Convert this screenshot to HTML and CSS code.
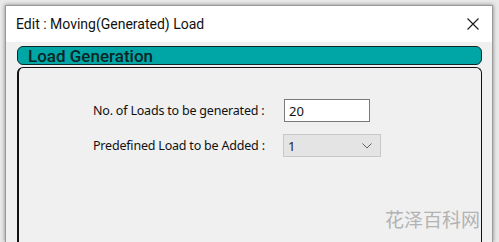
FILE: index.html
```html
<!DOCTYPE html>
<html lang="en">
<head>
    <meta charset="UTF-8">
    <title>Edit : Moving(Generated) Load</title>
    <link rel="stylesheet" href="styles.css">
</head>
<body>
    <div class="window">
        <div class="titlebar">
            <span class="title">Edit : Moving(Generated) Load</span>
            <svg class="close" width="12" height="12" viewBox="0 0 12 12">
                <path d="M0.5 0.5 L11.5 11.5 M11.5 0.5 L0.5 11.5" stroke="#1a1a1a" stroke-width="1.1" fill="none"/>
            </svg>
        </div>
        <div class="content">
            <div class="group-head">Load Generation</div>
            <div class="group-body">
                <div class="form">
                    <label class="label" for="count">No. of Loads to be generated :</label>
                    <input class="textbox" id="count" type="text" value="20">
                    <label class="label" for="predef">Predefined Load to be Added :</label>
                    <div class="combo" id="predef">
                        <span>1</span>
                        <svg width="10" height="6" viewBox="0 0 10 6">
                            <path d="M0.5 0.5 L5 5 L9.5 0.5" stroke="#606060" stroke-width="1" fill="none"/>
                        </svg>
                    </div>
                </div>
            </div>
            <div class="watermark">花泽百科网</div>
        </div>
    </div>
</body>
</html>
```

FILE: styles.css
```css
html, body {
    height: 100%;
}

body {
    margin: 0;
    padding: 5px 6px 0 5px;
    background: #e9e9e9;
    box-sizing: border-box;
    overflow: hidden;
    font-family: "Noto Sans", "Open Sans", sans-serif;
}

.window {
    height: 100%;
    display: flex;
    flex-direction: column;
    background: #fff;
    box-shadow: 0 0 4px rgba(0, 0, 0, 0.45);
    border: 1px solid #9a9a9a;
    border-bottom: none;
    box-sizing: border-box;
}

.titlebar {
    height: 36px;
    flex: none;
    display: flex;
    align-items: center;
    justify-content: space-between;
    padding: 0 13px 0 10px;
}

.title {
    font-family: Roboto, "Noto Sans", sans-serif;
    font-size: 14px;
    color: #111;
}

.content {
    position: relative;
    flex: 1;
    display: flex;
    flex-direction: column;
    background: #f0f0f0;
    padding: 4px 10px 0 11px;
}

.group-head {
    height: 17px;
    flex: none;
    background: #00a6a6;
    border: 1px solid #0b2b2b;
    border-radius: 6px;
    padding-left: 10px;
    font-family: Roboto, "Liberation Sans", sans-serif;
    font-weight: 500;
    font-size: 17px;
    line-height: 18px;
    color: #0a2424;
}

.group-body {
    margin-top: 2px;
    flex: 1;
    border: 1px solid #111;
    border-bottom: none;
    border-left-width: 2px;
    border-radius: 6px 6px 0 0;
    padding: 31px 0 0 74px;
}

.form {
    display: grid;
    grid-template-columns: 191px auto;
    row-gap: 12px;
    align-items: center;
    justify-items: start;
}

.label {
    font-size: 12.5px;
    color: #111;
    letter-spacing: -0.2px;
}

.textbox {
    width: 80px;
    height: 21px;
    margin: 0;
    padding: 0 0 0 4px;
    border: 1px solid #7a7a7a;
    background: #fff;
    font-family: "Noto Sans", sans-serif;
    font-size: 13px;
    color: #111;
    box-sizing: content-box;
}

.combo {
    width: 84px;
    height: 21px;
    margin-left: -1px;
    border: 1px solid #c8c8c8;
    background: #e4e4e4;
    display: flex;
    align-items: center;
    justify-content: space-between;
    padding: 0 8px 0 4px;
    box-sizing: content-box;
    font-size: 13px;
    color: #222;
}

.watermark {
    position: absolute;
    left: 379px;
    top: 163px;
    font-family: "Noto Sans CJK SC", sans-serif;
    font-size: 19px;
    color: #b3b3b3;
}
```
